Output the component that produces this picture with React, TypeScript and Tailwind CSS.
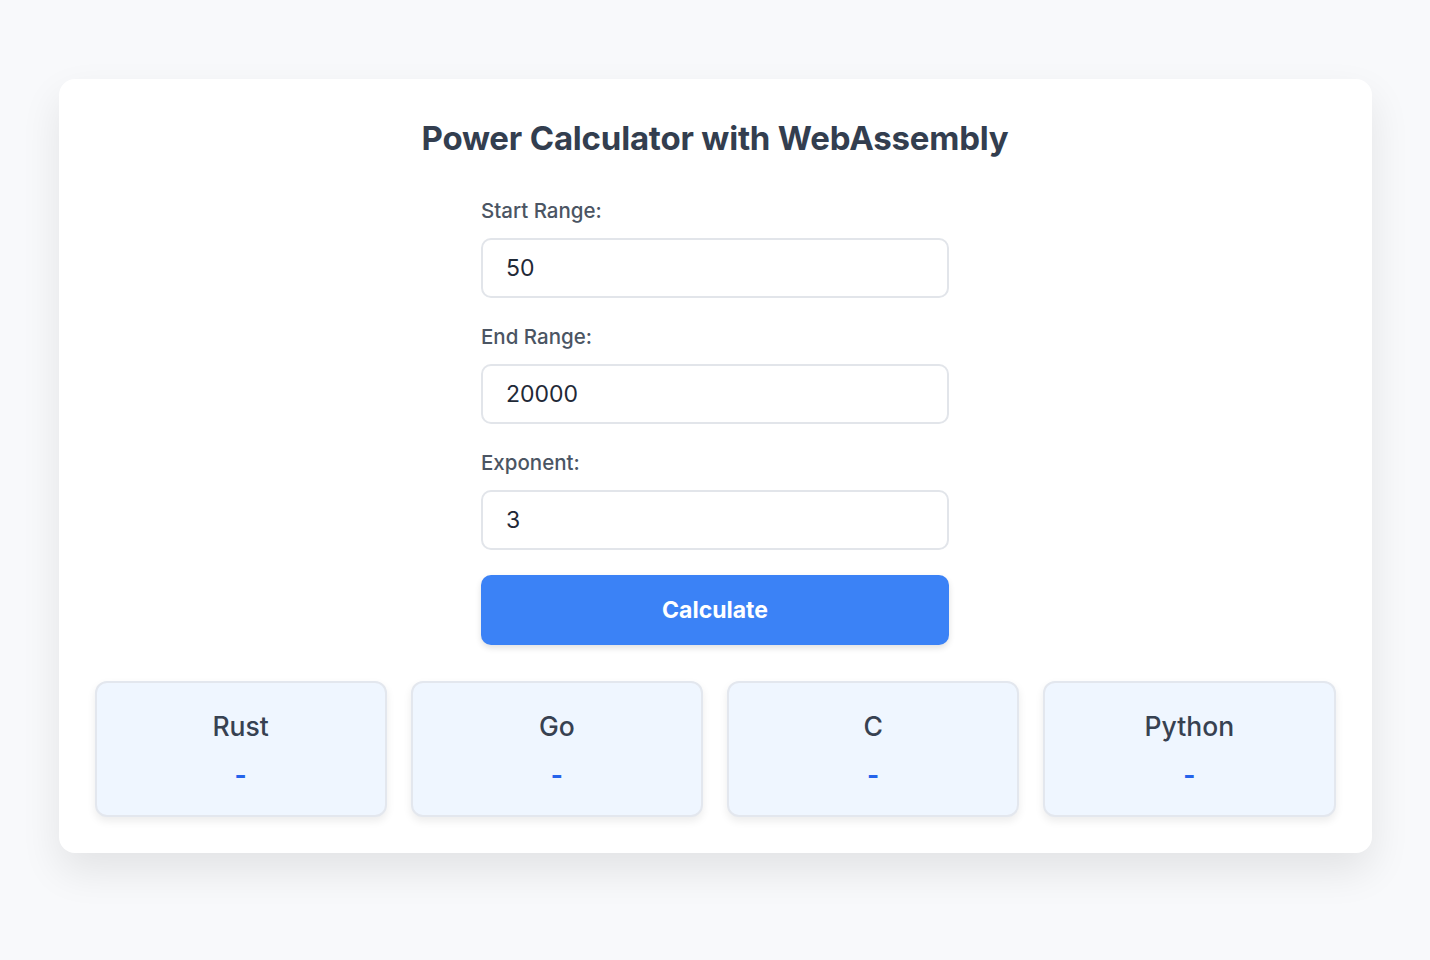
import React, { useState } from 'react';

const fields = [
  { id: 'start', label: 'Start Range:', value: '50' },
  { id: 'end', label: 'End Range:', value: '20000' },
  { id: 'exp', label: 'Exponent:', value: '3' },
];

const langs = ['Rust', 'Go', 'C', 'Python'];

export default function App() {
  const [values, setValues] = useState<Record<string, string>>({ start: '50', end: '20000', exp: '3' });

  return (
    <div
      className="min-h-[960px] w-full bg-[#f8f9fb] pt-[79px]"
      style={{ fontFamily: 'Inter, "Noto Sans", sans-serif' }}
    >
      <div className="mx-auto w-[1313px] h-[774px] bg-white rounded-[16px] shadow-[0_18px_40px_rgba(0,0,0,0.09)] px-[36px] pt-[37px]">
        <h1 className="text-center text-[33px] leading-[44px] font-bold text-[#333e4f] tracking-[-0.2px]">
          Power Calculator with WebAssembly
        </h1>

        <div className="mx-auto w-[468px] mt-[37px] flex flex-col gap-[25px]">
          {fields.map((f) => (
            <div key={f.id}>
              <label className="block text-[20.5px] leading-[28px] font-medium text-[#4b5563] mb-[13px]">
                {f.label}
              </label>
              <input
                type="number"
                value={values[f.id]}
                onChange={(e) => setValues({ ...values, [f.id]: e.target.value })}
                className="w-full h-[60px] rounded-[10px] border-2 border-[#e2e5ea] bg-white pl-[23px] text-[23px] text-[#1f2937] outline-none"
              />
            </div>
          ))}
          <button className="w-full h-[70px] rounded-[10px] bg-[#3b82f6] text-white text-[23px] font-bold shadow-[0_3px_6px_rgba(0,0,0,0.12)]">
            Calculate
          </button>
        </div>

        <div className="grid grid-cols-4 gap-[24px] mt-[36px]">
          {langs.map((l) => (
            <div
              key={l}
              className="h-[136px] rounded-[12px] bg-[#eff6ff] border-2 border-[#e3e7ee] shadow-[0_4px_8px_rgba(0,0,0,0.08)] flex flex-col items-center pt-[24px]"
            >
              <div className="text-[26.5px] leading-[38px] font-medium text-[#374151]">{l}</div>
              <div className="mt-[12px] text-[26px] leading-[36px] font-bold text-[#2563eb]">-</div>
            </div>
          ))}
        </div>
      </div>
    </div>
  );
}
